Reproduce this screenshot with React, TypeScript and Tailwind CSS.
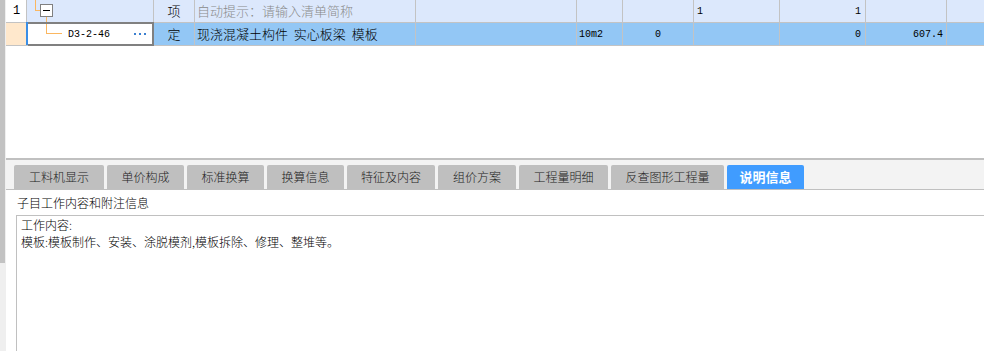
import { clsx } from 'clsx'

const tabs = [
  { label: '工料机显示', w: 'w-[90px]' },
  { label: '单价构成', w: 'w-[77px]' },
  { label: '标准换算', w: 'w-[77px]' },
  { label: '换算信息', w: 'w-[77px]' },
  { label: '特征及内容', w: 'w-[88px]' },
  { label: '组价方案', w: 'w-[78px]' },
  { label: '工程量明细', w: 'w-[89px]' },
  { label: '反查图形工程量', w: 'w-[113px]' },
  { label: '说明信息', w: 'w-[77px]', active: true },
]

const cell = 'shrink-0 h-full flex items-center border-r border-[#c3c3c3]'
const mono = "font-['Liberation_Mono',monospace] text-[10px] font-normal"

export default function App() {
  return (
    <div className="flex w-[984px] h-[351px] overflow-hidden bg-white text-black font-light font-['Noto_Sans_CJK_SC',sans-serif]">
      {/* page scrollbar */}
      <div className="w-[6px] shrink-0 bg-[#efefef]">
        <div className="w-[5px] h-[263px] bg-[#c2c2c2]" />
      </div>

      <div className="flex-1 flex flex-col min-w-0">
        {/* grid */}
        <div className="relative h-[158px] text-[13px]">
          <div className="flex h-[23px] border-b border-[#c3c3c3] bg-[#dce8fc]">
            <div className={clsx(cell, 'w-[21px] bg-white justify-center')}>
              <span className="font-['Liberation_Mono',monospace] text-[12px] font-normal pl-[1px]">1</span>
            </div>
            <div className={clsx(cell, 'w-[127px] relative')}>
              <svg width="40" height="23" className="absolute left-0 top-0" shapeRendering="crispEdges">
                <line x1="8.5" y1="0" x2="8.5" y2="10.5" stroke="#fbb760" />
                <line x1="8.5" y1="10.5" x2="13" y2="10.5" stroke="#fbb760" />
                <line x1="19.5" y1="17" x2="19.5" y2="23" stroke="#fbb760" />
                <rect x="13.5" y="4.5" width="12" height="12" fill="#fff" stroke="#808080" />
                <line x1="16" y1="10.5" x2="23" y2="10.5" stroke="#000" />
              </svg>
            </div>
            <div className={clsx(cell, 'w-[41px] justify-center')}>项</div>
            <div className={clsx(cell, 'w-[221px] pl-[2px] text-[#8a8a8a]')}>自动提示：请输入清单简称</div>
            <div className={clsx(cell, 'w-[161px]')} />
            <div className={clsx(cell, 'w-[46px]')} />
            <div className={clsx(cell, 'w-[71px]')} />
            <div className={clsx(cell, 'w-[86px] pl-[3px]', mono)}>1</div>
            <div className={clsx(cell, 'w-[86px] justify-end pr-[4px]', mono)}>1</div>
            <div className={clsx(cell, 'w-[81px]')} />
            <div className="flex-1" />
          </div>

          <div className="flex h-[23px] border-b border-[#c3c3c3] bg-[#93c7f5]">
            <div className={clsx(cell, 'w-[21px] bg-[#ffe8cc]')} />
            <div className={clsx(cell, 'w-[127px] bg-white')} />
            <div className={clsx(cell, 'w-[41px] justify-center')}>定</div>
            <div className={clsx(cell, 'w-[221px] pl-[2px] [word-spacing:3px]')}>现浇混凝土构件 实心板梁 模板</div>
            <div className={clsx(cell, 'w-[161px]')} />
            <div className={clsx(cell, 'w-[46px] pl-[2px]', mono)}>10m2</div>
            <div className={clsx(cell, 'w-[71px] justify-center', mono)}>0</div>
            <div className={clsx(cell, 'w-[86px]')} />
            <div className={clsx(cell, 'w-[86px] justify-end pr-[4px]', mono)}>0</div>
            <div className={clsx(cell, 'w-[81px] justify-end pr-[3px]', mono)}>607.4</div>
            <div className="flex-1" />
          </div>

          {/* selected cell editor */}
          <div className="absolute left-[20px] top-[22px] w-[2px] h-[23px] bg-[#3a8ee6]" />
          <div className="absolute left-[22px] top-[22px] w-[126px] h-[24px] border-2 border-l-0 border-[#808080] bg-white flex items-center">
            <svg width="40" height="20" className="absolute left-0 top-0" shapeRendering="crispEdges">
              <line x1="18.5" y1="0" x2="18.5" y2="9.5" stroke="#fbb760" />
              <line x1="18.5" y1="9.5" x2="34" y2="9.5" stroke="#fbb760" />
            </svg>
            <span className={clsx('ml-[40px]', mono)}>D3-2-46</span>
            <span className="ml-auto mr-[6px] flex gap-[3px]">
              <span className="w-[2px] h-[2px] bg-[#3b7fd0]" />
              <span className="w-[2px] h-[2px] bg-[#3b7fd0]" />
              <span className="w-[2px] h-[2px] bg-[#3b7fd0]" />
            </span>
          </div>
        </div>

        <div className="h-[2px] bg-[#c0c0c0]" />

        {/* tabs */}
        <div className="h-[30px] flex items-start gap-[3px] pl-[8px] pt-[5px] bg-[#f3f3f3] border-b border-[#c0c0c0]">
          {tabs.map((t) => (
            <div
              key={t.label}
              className={clsx(
                'h-[24px] rounded-t-[2px] flex items-center justify-center',
                t.w,
                t.active ? 'bg-[#409cff] text-white font-bold text-[13px]' : 'bg-[#bfbfbf] text-[#222] text-[12px]'
              )}
            >
              {t.label}
            </div>
          ))}
        </div>

        {/* notes */}
        <div className="h-[25px] flex items-center pl-[11px] text-[12px]">子目工作内容和附注信息</div>
        <div className="flex-1 ml-[10px] border-t border-l border-[#c0c0c0] pl-[4px] text-[12px] leading-[17px]">
          <div>工作内容:</div>
          <div>模板:模板制作、安装、涂脱模剂,模板拆除、修理、整堆等。</div>
        </div>
      </div>
    </div>
  )
}
